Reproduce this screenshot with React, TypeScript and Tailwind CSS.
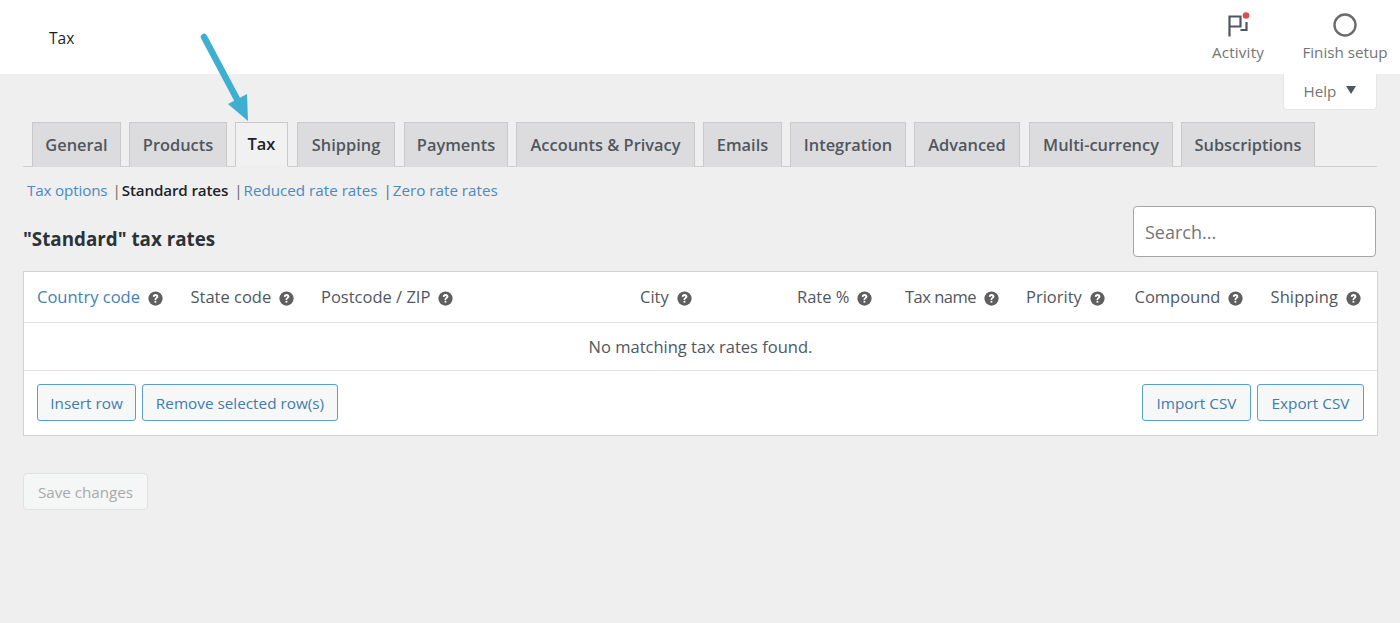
function Q() {
  return (
    <svg viewBox="0 0 16 16" className="w-[15px] h-[15px] shrink-0 ml-2 mt-[3px]">
      <circle cx="8" cy="8" r="7.6" fill="#5f5f5f" />
      <path d="M5.1 6.2C5.1 4.4 6.4 3.3 8.1 3.3s3 1 3 2.5c0 1.2-.7 1.8-1.5 2.3-.6.4-.8.6-.8 1.2v.3H7v-.6c0-1 .5-1.5 1.1-1.9.5-.3.8-.6.8-1.1 0-.5-.4-.8-.9-.8-.6 0-1 .4-1 1.1z" fill="#fff" />
      <rect x="7" y="10.5" width="1.9" height="1.9" fill="#fff" />
    </svg>
  );
}
const tabs = [
  ["General", "w-[89px]"],
  ["Products", "w-[98px]"],
  ["Tax", "w-[53px]"],
  ["Shipping", "w-[98px] ml-[1px]"],
  ["Payments", "w-[104px] ml-[1px]"],
  ["Accounts & Privacy", "w-[179px]"],
  ["Emails", "w-[79px]"],
  ["Integration", "w-[116px]"],
  ["Advanced", "w-[106px]"],
  ["Multi-currency", "w-[144px] ml-[1px]"],
  ["Subscriptions", "w-[134px]"],
];
const cols = [
  ["Country code", "w-[153.5px]", "text-[#3f82b8]"],
  ["State code", "w-[130.5px]", ""],
  ["Postcode / ZIP", "w-[319px]", ""],
  ["City", "w-[157px]", ""],
  ["Rate %", "w-[108px]", ""],
  ["Tax name", "w-[121px]", "tracking-[-0.5px]"],
  ["Priority", "w-[108.5px]", ""],
  ["Compound", "w-[136px]", ""],
  ["Shipping", "", "tracking-[0.1px]"],
];
function Btn({ children, w }: { children: string; w: string }) {
  return (
    <div className={`${w} h-[37px] pt-[1px] flex items-center justify-center rounded-[3px] border border-[#5b9dd0] bg-[#f6f7f7] text-[#3f7cb0] text-[15.3px]`}>
      {children}
    </div>
  );
}
export default function App() {
  return (
    <div className="w-[1400px] h-[623px] overflow-hidden bg-[#efefef] text-[#3c434a] font-['Open_Sans','Noto_Sans',sans-serif]">
      <header className="h-[74px] bg-white flex items-start relative">
        <div className="ml-[49px] mt-[27px] text-[15.5px] leading-[22px] text-[#1e1e1e]">Tax</div>
        <div className="ml-auto flex text-[#757575] text-[15.2px]">
          <div className="w-[90px] flex flex-col items-center mr-[7px]">
            <svg viewBox="0 0 26 26" className="w-[26px] h-[26px] mt-[12px]">
              <path d="M4.5 24.5V4.5H15.5V14.5H4.5M15.5 18H21.5V10" fill="none" stroke="#50575e" strokeWidth="2.2" />
              <circle cx="21" cy="3.5" r="3.3" fill="#d94f4f" />
            </svg>
            <span className="leading-[20px] mt-[4px] tracking-[0.2px]">Activity</span>
          </div>
          <div className="w-[110px] flex flex-col items-center">
            <svg viewBox="0 0 26 26" className="w-[26px] h-[26px] mt-[12px]">
              <circle cx="13" cy="13" r="10.5" fill="none" stroke="#6b6b6b" strokeWidth="2.4" />
            </svg>
            <span className="leading-[20px] mt-[4px] whitespace-nowrap">Finish setup</span>
          </div>
        </div>
      </header>
      <div className="relative px-[23px]">
        <div className="absolute right-[23px] top-0 w-[94px] h-[36px] bg-white rounded-b-[4px] border border-t-0 border-[#e6e6e6] flex items-center justify-center gap-[10px] text-[#757575] text-[15.2px]">
          <span>Help</span>
          <svg viewBox="0 0 10 8" className="w-[10px] h-[8px] mb-[3px]"><path d="M0 0h10L5 8z" fill="#50575e" /></svg>
        </div>
        <nav className="pt-[48px] pl-[9px] flex gap-[8px] h-[93px] border-b border-[#cfcfcf] w-[1354px]">
          {tabs.map(([t, w]) => (
            <div
              key={t}
              className={`${w} h-[45px] shrink-0 flex items-center justify-center border border-[#c9c9c9] text-[16.4px] font-semibold whitespace-nowrap ${
                t === "Tax" ? "bg-[#f1f1f1] border-b-[#f1f1f1] text-[#1d2327]" : "bg-[#dcdcde] text-[#50575e] border-b-0 h-[44px]"
              }`}
            >
              {t}
            </div>
          ))}
        </nav>
        <div className="mt-[13px] pl-[4px] flex text-[15.2px] leading-[20px] text-[#4a8abf] whitespace-nowrap">
          <span className="tracking-[-0.15px]">Tax options</span>
          <span className="text-[#666] ml-[5px] mr-[1px]">|</span>
          <span className="font-semibold text-[#1d2327] tracking-[-0.15px]">Standard rates</span>
          <span className="text-[#666] ml-[6px] mr-[1px]">|</span>
          <span>Reduced rate rates</span>
          <span className="text-[#666] ml-[6px] mr-[1px]">|</span>
          <span>Zero rate rates</span>
        </div>
        <div className="flex justify-between items-start mt-[6px] h-[65px] w-[1353px]">
          <h2 className="mt-[20px] text-[18.8px] leading-[26px] font-bold text-[#2c3338]">"Standard" tax rates</h2>
          <div className="w-[243px] h-[51px] pt-[2px] bg-white rounded-[4px] border border-[#a5a5a5] flex items-center pl-[11px] text-[18px] text-[#757575]">Search...</div>
        </div>
        <div className="w-[1355px] h-[165px] bg-white border border-[#d3d3d3] text-[#50575e]">
          <div className="h-[51px] pl-[13px] flex items-center border-b border-[#e4e4e4] text-[16.5px] whitespace-nowrap">
            {cols.map(([t, w, c]) => (
              <div key={t} className={`${w} flex items-center ${c}`}>
                <span>{t}</span>
                <Q />
              </div>
            ))}
          </div>
          <div className="h-[48px] flex items-center justify-center border-b border-[#e4e4e4] text-[16.5px] pt-[1px]">No matching tax rates found.</div>
          <div className="h-[64px] flex items-start px-[13px] pt-[13px] gap-[6px]">
            <Btn w="w-[99px]">Insert row</Btn>
            <Btn w="w-[196px]">Remove selected row(s)</Btn>
            <div className="ml-auto flex gap-[6px]">
              <Btn w="w-[109px]">Import CSV</Btn>
              <Btn w="w-[107px]">Export CSV</Btn>
            </div>
          </div>
        </div>
        <div className="mt-[37px] w-[125px] h-[37px] pt-[1px] flex items-center justify-center rounded-[4px] border border-[#e2e2e2] bg-[#f5f6f6] text-[#a7aaad] text-[15.2px]">Save changes</div>
      </div>
      <svg viewBox="0 0 1400 623" className="absolute top-0 left-0 w-[1400px] h-[623px] pointer-events-none">
        <path d="M204 37 L238 101" stroke="#3eaed1" strokeWidth="6.5" strokeLinecap="round" fill="none" />
        <path d="M228 104 L247 94 L248 121z" fill="#3eaed1" />
      </svg>
    </div>
  );
}
